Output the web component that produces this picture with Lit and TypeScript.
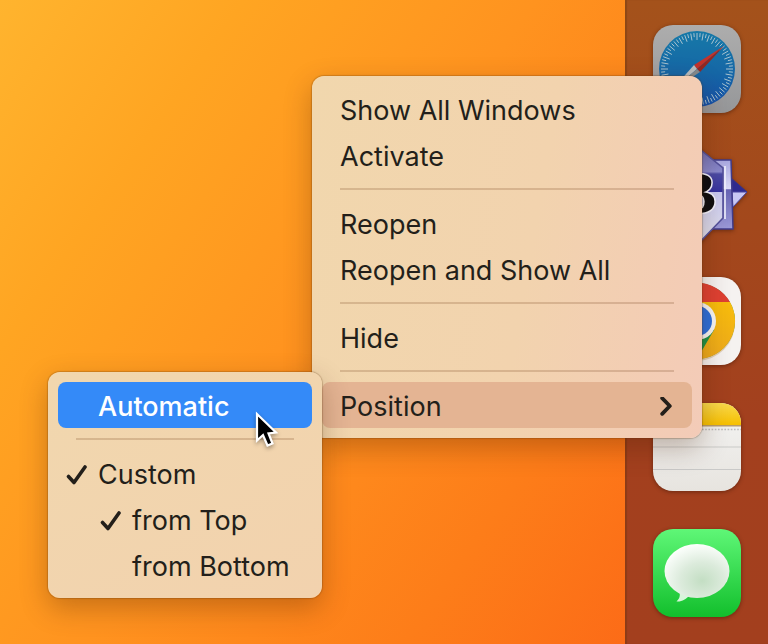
import { LitElement, html, css, svg, nothing } from "lit";
import { customElement, property } from "lit/decorators.js";
import { classMap } from "lit/directives/class-map.js";

interface Entry {
  label?: string;
  separator?: boolean;
  checked?: boolean;
  indent?: boolean;
  active?: boolean;
  children?: Entry[];
}

const submenu: Entry[] = [
  { label: "Automatic", active: true },
  { separator: true },
  { label: "Custom", checked: true },
  { label: "from Top", checked: true, indent: true },
  { label: "from Bottom", indent: true },
];

const menu: Entry[] = [
  { label: "Show All Windows" },
  { label: "Activate" },
  { separator: true },
  { label: "Reopen" },
  { label: "Reopen and Show All" },
  { separator: true },
  { label: "Hide" },
  { separator: true },
  { label: "Position", children: submenu },
];

const ticks = Array.from({ length: 72 }, (_, i) => {
  const a = (i * Math.PI) / 36;
  const inner = i % 2 ? 32 : 29;
  const x = Math.sin(a);
  const y = Math.cos(a);
  return svg`<line x1=${44 + inner * x} y1=${44 + inner * y} x2=${44 + 36 * x} y2=${44 + 36 * y}
    stroke="#a9c3cf" stroke-width="1" />`;
});

const safari = svg`
  <defs>
    <linearGradient id="sf-plate" x1="0" y1="0" x2="0" y2="1">
      <stop offset="0" stop-color="#adadad" /><stop offset="1" stop-color="#969799" />
    </linearGradient>
    <linearGradient id="sf-dial" x1="0" y1="0" x2="0" y2="1">
      <stop offset="0" stop-color="#1679a8" /><stop offset=".55" stop-color="#1667a6" />
      <stop offset="1" stop-color="#1550a8" />
    </linearGradient>
  </defs>
  <rect width="88" height="88" rx="20" fill="url(#sf-plate)" />
  <circle cx="44" cy="44" r="38" fill="url(#sf-dial)" />
  ${ticks}
  <path d="M71 21 41 40 44 44Z" fill="#c4322b" />
  <path d="M71 21 47 47 44 44Z" fill="#962720" />
  <path d="M17 67 41 40 44 44Z" fill="#b9bcbd" />
  <path d="M17 67 47 47 44 44Z" fill="#85898b" />`;

const editor = svg`
  <defs>
    <linearGradient id="ed-band" x1="0" y1="0" x2="0" y2="1">
      <stop offset="0" stop-color="#a9a8e0" /><stop offset=".42" stop-color="#dcdcf8" />
      <stop offset=".43" stop-color="#6764b4" /><stop offset="1" stop-color="#9c9ad8" />
    </linearGradient>
    <linearGradient id="ed-top" x1="0" y1="0" x2="0" y2="1">
      <stop offset="0" stop-color="#6a69ad" /><stop offset=".55" stop-color="#8a89cd" />
      <stop offset=".6" stop-color="#4b4aa5" /><stop offset="1" stop-color="#3532a0" />
    </linearGradient>
    <linearGradient id="ed-bottom" x1="0" y1="0" x2="0" y2="1">
      <stop offset="0" stop-color="#c9c9f2" /><stop offset="1" stop-color="#e2e2ea" />
    </linearGradient>
  </defs>
  <path d="M78 27 94 41 79 41Z" fill="#2e2a8e" stroke="#35318c" />
  <path d="M79 41H94L80 56Z" fill="#c8c8f4" stroke="#4845a0" />
  <path d="M10 9H78L80 78H10Z" fill="url(#ed-band)" stroke="#403d8c" stroke-width="1.5" />
  <path d="M72 15 72 68" stroke="#f4f4ff" stroke-width="1.6" />
  <path d="M44-4 70 17V41H18V17Z" fill="url(#ed-top)" />
  <path d="M18 41H70V67L44 94 18 67Z" fill="url(#ed-bottom)" />
  <path d="M44-4 70 17V67L44 94" fill="none" stroke="#54529c" stroke-width="1.6" />
  <text class="glyph" x="63" y="62" text-anchor="end">B</text>`;

const chrome = svg`
  <defs>
    <linearGradient id="ch-yellow" x1="0" y1="0" x2="0" y2="1">
      <stop offset="0" stop-color="#f8bd0c" /><stop offset="1" stop-color="#eda91c" />
    </linearGradient>
  </defs>
  <rect width="88" height="88" rx="20" fill="#f5f2f0" />
  <circle cx="44" cy="46" r="38" fill="#b98b4a" opacity=".35" />
  <circle cx="44" cy="44" r="38" fill="#1d9348" />
  <path d="M77 25A38 38 0 0 0 11 25L28 54 44 44V25Z" fill="#df4032" />
  <path d="M44 25H77A38 38 0 0 1 44 82L61 53 44 44Z" fill="url(#ch-yellow)" />
  <circle cx="44" cy="44" r="19" fill="#f7f7f7" />
  <circle cx="44" cy="44" r="15" fill="#2b6fdc" />`;

const notes = svg`
  <defs>
    <linearGradient id="nt-head" x1="0" y1="0" x2="0" y2="1">
      <stop offset="0" stop-color="#f9d94c" /><stop offset="1" stop-color="#f6bf00" />
    </linearGradient>
    <linearGradient id="nt-page" x1="0" y1="0" x2="0" y2="1">
      <stop offset="0" stop-color="#f4f4f3" /><stop offset="1" stop-color="#e7e4df" />
    </linearGradient>
    <clipPath id="nt-clip"><rect width="88" height="88" rx="20" /></clipPath>
  </defs>
  <g clip-path="url(#nt-clip)">
    <rect width="88" height="88" fill="url(#nt-page)" />
    <rect width="88" height="22" fill="url(#nt-head)" />
    <rect y="22" width="88" height="1.5" fill="#b79b6a" />
    <path d="M1 26.5H88" stroke="#b9b9bb" stroke-width="1.6" stroke-dasharray="1.6 1.6" />
    <path d="M0 44H88M0 66.5H88" stroke="#c9c9c8" stroke-width="1.2" />
  </g>`;

const messages = svg`
  <defs>
    <linearGradient id="ms-plate" x1="0" y1="0" x2="0" y2="1">
      <stop offset="0" stop-color="#5ff777" /><stop offset="1" stop-color="#12bf2c" />
    </linearGradient>
    <radialGradient id="ms-bubble" cx=".58" cy=".68" r=".68">
      <stop offset="0" stop-color="#c3dec3" /><stop offset=".5" stop-color="#dcebdc" />
      <stop offset="1" stop-color="#fcfffc" />
    </radialGradient>
  </defs>
  <rect width="88" height="88" rx="20" fill="url(#ms-plate)" />
  <path d="M26 62C28 67 26 70 23.500 72.500C29 73 33 70 36 67Z" fill="#d7f5da" />
  <ellipse cx="44" cy="42" rx="32.500" ry="27" fill="url(#ms-bubble)" />`;

const dockApps = [
  { name: "Safari", art: safari },
  { name: "Editor", art: editor },
  { name: "Chrome", art: chrome },
  { name: "Notes", art: notes },
  { name: "Messages", art: messages },
];

@customElement("app-dock")
export class AppDock extends LitElement {
  static styles = css`
    :host {
      display: block;
      background: linear-gradient(#a4521b, #a3481c 35%, #a3401e 65%, #a33f1e);
      box-shadow: inset 2px 0 1px rgba(90, 50, 10, 0.3);
    }
    .dock {
      display: flex;
      flex-direction: column;
      justify-content: center;
      gap: 38px;
      min-height: 100%;
      padding: 25px 27px 27px 28px;
      box-sizing: border-box;
    }
    .app {
      display: block;
      width: 88px;
      height: 88px;
      padding: 0;
      border: 0;
      background: none;
    }
    .art {
      display: block;
      width: 100%;
      height: 100%;
      overflow: visible;
      filter: drop-shadow(0 1px 2px rgba(40, 10, 0, 0.45));
    }
    .glyph {
      font: bold 60px "Liberation Serif", serif;
      fill: #0c0c10;
      stroke: #f4f4ff;
      stroke-width: 3px;
      paint-order: stroke;
    }
  `;

  render() {
    return html`<nav class="dock" aria-label="Dock">
      ${dockApps.map(
        (app) => html`<button class="app" aria-label=${app.name}>
          <svg class="art" viewBox="0 0 88 88" aria-hidden="true">${app.art}</svg>
        </button>`
      )}
    </nav>`;
  }
}

@customElement("popup-menu")
export class PopupMenu extends LitElement {
  @property({ attribute: false }) entries: Entry[] = [];
  @property({ type: Boolean, reflect: true }) nested = false;

  static styles = css`
    :host {
      display: block;
      border-radius: 12px;
      background: linear-gradient(100deg, #f1d7ad, #f2d3ae 55%, #f3cdb4 85%, #f3cbb8);
      box-shadow: 0 0 1px 1px rgba(90, 50, 10, 0.25), 0 10px 28px rgba(70, 30, 0, 0.3);
    }
    :host([nested]) {
      background: linear-gradient(150deg, #f1d7ae, #f2d2ae);
    }
    .list {
      margin: 0;
      padding: 10px;
      list-style: none;
    }
    .row {
      position: relative;
    }
    .item {
      display: flex;
      align-items: center;
      box-sizing: border-box;
      width: 100%;
      height: 46px;
      padding: 4px 20px 0 18px;
      border: 0;
      border-radius: 8px;
      background: none;
      color: #231f1a;
      font: 400 27px/32px Inter, sans-serif;
      text-align: left;
      white-space: nowrap;
    }
    .nested {
      gap: 10px;
      padding: 4px 18px 0 8px;
    }
    .indent {
      padding-left: 42px;
    }
    .open {
      background: #e4b493;
    }
    .active {
      background: #348af8;
      color: #fff;
      font-weight: 500;
    }
    .label {
      flex: 1;
    }
    .mark {
      display: block;
      flex: none;
      width: 22px;
      height: 22px;
    }
    .chevron {
      display: block;
      flex: none;
      width: 12px;
      height: 20px;
    }
    .separator {
      display: flex;
      align-items: center;
      height: 22px;
      padding: 0 18px;
    }
    .rule {
      flex: 1;
      height: 2px;
      margin: 0;
      border: 0;
      background: rgba(120, 70, 30, 0.22);
    }
    .submenu {
      position: absolute;
      top: -10px;
      right: 100%;
      width: 274px;
    }
    .pointer {
      position: absolute;
      top: 28px;
      left: 196px;
      width: 26px;
      height: 40px;
      z-index: 1;
      filter: drop-shadow(0 2px 2px rgba(0, 0, 0, 0.35));
    }
  `;

  private mark(checked?: boolean) {
    return html`<svg class="mark" viewBox="0 0 22 22" aria-hidden="true">
      ${checked
        ? svg`<path d="M2.500 12.500 8 18.500 19 3" fill="none" stroke="currentColor" stroke-width="3.600"
            stroke-linecap="round" stroke-linejoin="round" />`
        : nothing}
    </svg>`;
  }

  private row(e: Entry): unknown {
    if (e.separator) return html`<li class="separator" role="none"><hr class="rule" /></li>`;
    const classes = {
      item: true,
      nested: this.nested,
      indent: !!e.indent,
      open: !!e.children,
      active: !!e.active,
    };
    return html`<li class="row" role="none">
      <button class=${classMap(classes)} role="menuitem">
        ${this.nested ? this.mark(e.checked) : nothing}
        <span class="label">${e.label}</span>
        ${e.children
          ? html`<svg class="chevron" viewBox="0 0 12 20" aria-hidden="true">
              <path d="M2.200 1.200 9.800 9 2.200 16.800" fill="none" stroke="currentColor"
                stroke-width="3.800" stroke-linecap="round" stroke-linejoin="round" />
            </svg>`
          : nothing}
      </button>
      ${e.children
        ? html`<popup-menu class="submenu" nested .entries=${e.children}></popup-menu>`
        : nothing}
      ${this.nested && e.active
        ? html`<svg class="pointer" viewBox="0 0 26 40" aria-hidden="true">
            <path d="M3 4V30.500L9 25 13.500 35.500 18.500 33.500 14.500 23.500 22 22.500Z" fill="#000" stroke="#fff"
              stroke-width="2.200" />
          </svg>`
        : nothing}
    </li>`;
  }

  render() {
    return html`<ul class="list" role="menu">
      ${this.entries.map((e) => this.row(e))}
    </ul>`;
  }
}

@customElement("app-root")
export class AppRoot extends LitElement {
  static styles = css`
    :host {
      display: block;
    }
    .desktop {
      position: relative;
      display: grid;
      grid-template-columns: 1fr auto;
      min-height: 100vh;
      overflow: hidden;
      background: linear-gradient(125deg, #ffb42e, #ffa522 20%, #ff931f 44%, #fd7d19 70%, #fc6817 92%);
    }
    .dock {
      grid-column: 2;
    }
    .context {
      position: absolute;
      top: 76px;
      right: 66px;
      width: 390px;
    }
  `;

  render() {
    return html`<main class="desktop">
      <app-dock class="dock"></app-dock>
      <popup-menu class="context" .entries=${menu}></popup-menu>
    </main>`;
  }
}
